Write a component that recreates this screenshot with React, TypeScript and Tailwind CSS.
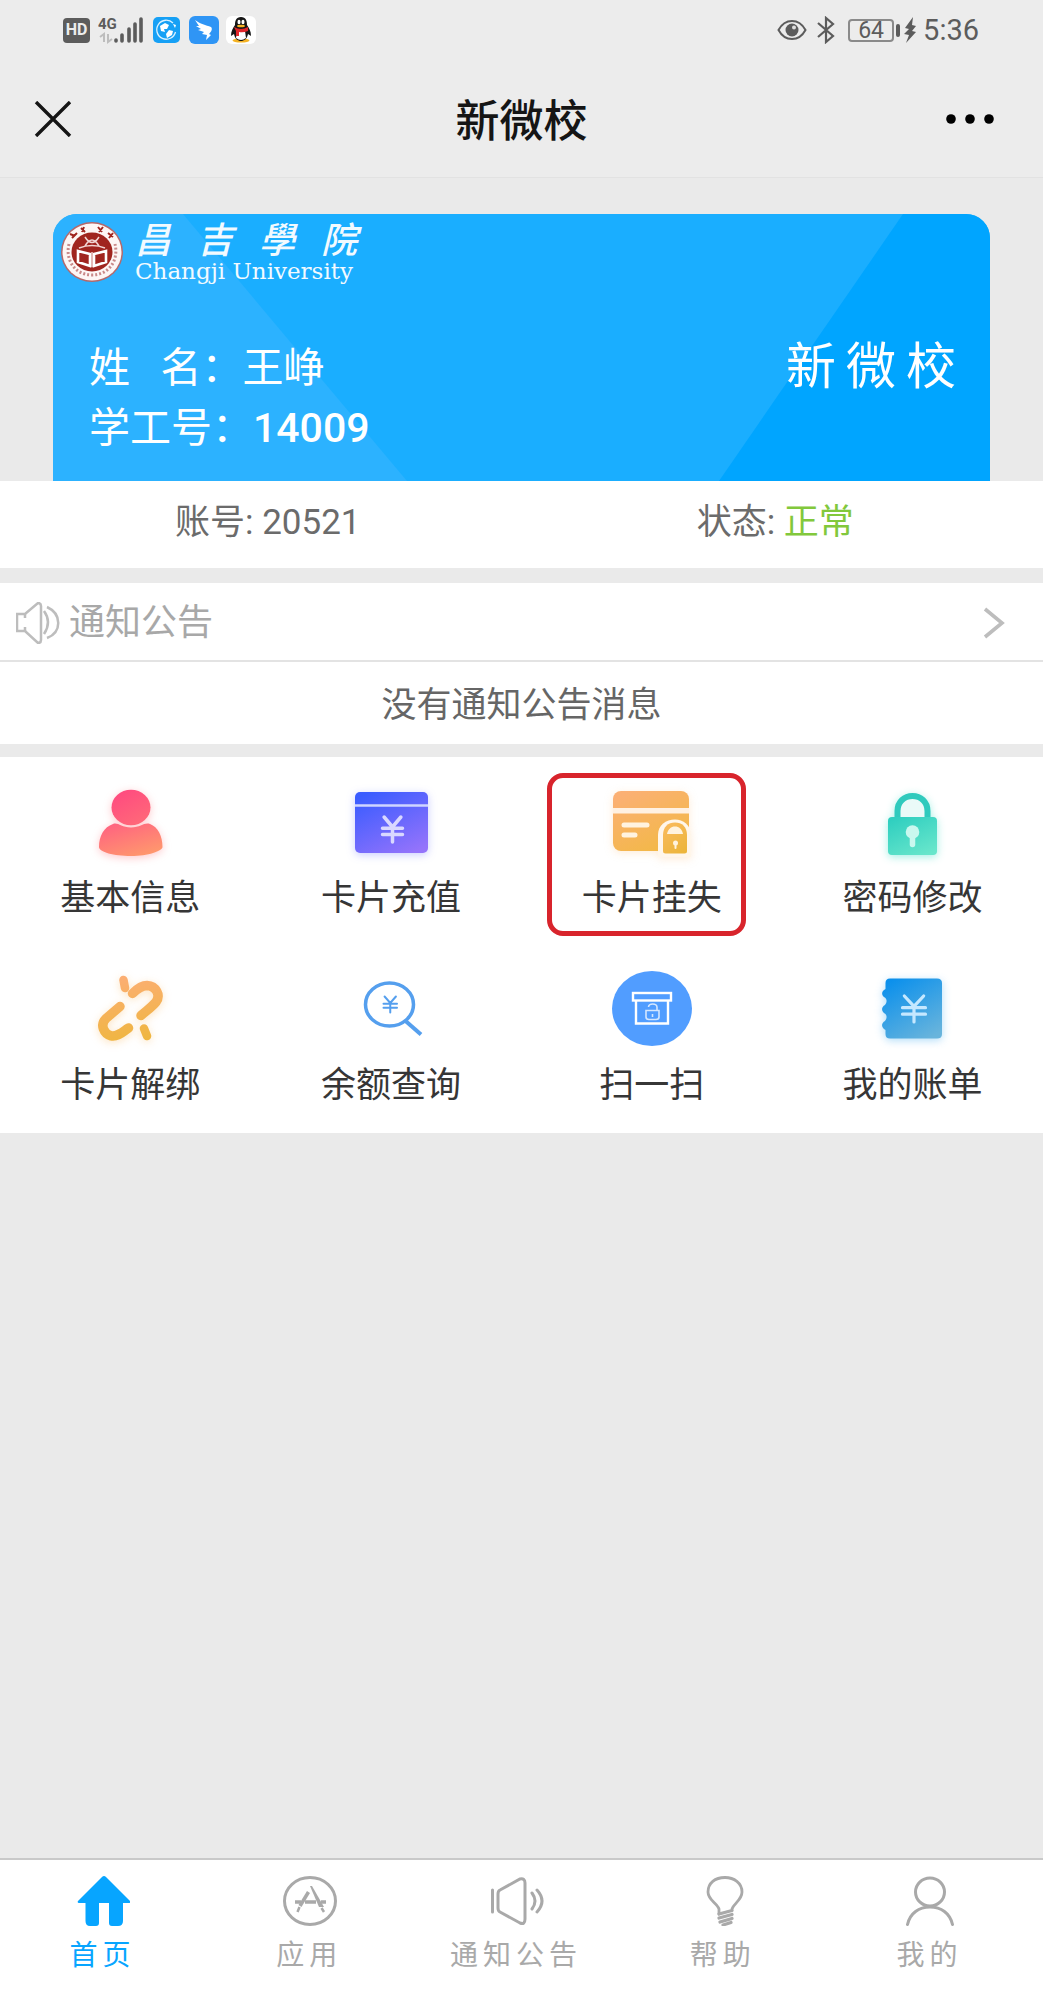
import React from 'react'

const gray = '#a9a9a9'

function Yen({ x, y, w, h, sw }: any) {
  return (
    <g transform={`translate(${x} ${y})`} fill="none" strokeWidth={sw} strokeLinecap="round">
      <path d={`M${w * 0.08} 0L${w / 2} ${h * 0.4}L${w * 0.92} 0M${w / 2} ${h * 0.4}V${h}M0 ${h * 0.45}H${w}M0 ${h * 0.7}H${w}`} />
    </g>
  )
}

function Gradient({ id, from, to }: any) {
  return (
    <defs>
      <linearGradient id={id} x1="0.2" y1="0" x2="0.8" y2="1">
        <stop offset="0" stopColor={from} />
        <stop offset="1" stopColor={to} />
      </linearGradient>
    </defs>
  )
}

const UserIcon = () => (
  <svg viewBox="0 0 80 75" className="h-[75px] w-20 drop-shadow-[0_2px_4px_rgba(255,100,110,0.35)]">
    <Gradient id="user" from="#ff4a80" to="#ff6a78" />
    <Gradient id="userBody" from="#ff6380" to="#ff9a6c" />
    <ellipse cx="41" cy="23.500" rx="19.500" ry="17.800" fill="url(#user)" />
    <path d="M23 40C28 38 31 43.500 41 43.500C51 43.500 54 38 60 40C68 43 72.500 52 72.500 63C72.500 67 58 72 41 72C24 72 9 68 9 63C9 52 14 43 23 40Z" fill="url(#userBody)" />
  </svg>
)

const RechargeIcon = () => (
  <svg viewBox="0 0 80 75" className="h-[75px] w-20 drop-shadow-[0_2px_4px_rgba(80,90,255,0.3)]">
    <Gradient id="recharge" from="#3a5cff" to="#9473fb" />
    <rect x="4" y="8" width="73" height="61" rx="5" fill="url(#recharge)" />
    <path d="M4 21.500H77" stroke="#cfd5ff" strokeWidth="2.500" />
    <g stroke="#d9d8ff"><Yen x={31.5} y={33} w={20} h={25} sw={3.5} /></g>
  </svg>
)

const LossIcon = () => (
  <svg viewBox="0 0 80 75" className="h-[75px] w-20 drop-shadow-[0_2px_4px_rgba(250,180,100,0.25)]">
    <Gradient id="loss" from="#fbb074" to="#f2b944" />
    <Gradient id="lossLock" from="#f9ba5c" to="#ecb53b" />
    <rect x="1" y="7" width="76" height="60" rx="8" fill="url(#loss)" />
    <path d="M1 26.800H77" stroke="#fff1e2" strokeWidth="5.600" />
    <path d="M12 41H35M12 51H23" stroke="#fff3df" strokeWidth="5" strokeLinecap="round" />
    <path d="M46 73V51C46 41 54 35.500 63 35.500C71 35.500 79 41 79 51V73Z" fill="#fff6ea" />
    <path d="M51 67V51C51 43 56 38.500 63 38.500C70 38.500 75 43 75 51V67Q75 69.500 72.500 69.500H53.500Q51 69.500 51 67Z" fill="url(#lossLock)" />
    <path d="M55 50C56 45 59 42.500 63 42.500C67 42.500 70 45 71 50Z" fill="#fff3df" />
    <circle cx="63.500" cy="59" r="2.500" fill="#fff3df" />
    <path d="M63.500 60V64" stroke="#fff3df" strokeWidth="2" strokeLinecap="round" />
  </svg>
)

const PasswordIcon = () => (
  <svg viewBox="0 0 80 75" className="h-[75px] w-20 drop-shadow-[0_2px_4px_rgba(50,220,195,0.45)]">
    <Gradient id="pwd" from="#30cfc0" to="#68e6cb" />
    <path d="M24.500 35V27C24.500 17.500 31.500 12 39.500 12C47.500 12 54.500 17.500 54.500 27V35" fill="#eafaf8" stroke="#2fcabd" strokeWidth="6" />
    <rect x="15" y="33" width="49" height="38" rx="4" fill="url(#pwd)" />
    <circle cx="39.500" cy="48" r="6.800" fill="#c9f8ef" />
    <path d="M39.500 50V60.500" stroke="#c9f8ef" strokeWidth="5.500" strokeLinecap="round" />
  </svg>
)

const UnbindIcon = () => (
  <svg viewBox="0 0 80 75" className="h-[75px] w-20 drop-shadow-[0_2px_4px_rgba(250,180,90,0.35)]">
    <defs>
      <linearGradient id="unbind" gradientUnits="userSpaceOnUse" x1="30" y1="5" x2="42" y2="70">
        <stop offset="0" stopColor="#fcae74" />
        <stop offset="1" stopColor="#efb640" />
      </linearGradient>
    </defs>
    <g fill="none" stroke="url(#unbind)" strokeLinecap="round" strokeLinejoin="round">
      <path d="M33.500 9L35 17M54 57.500L57 65" strokeWidth="8.500" />
      <path d="M42.500 22.500C48 17 52 14.500 57 14.500C66 15 71 24 66 31C62 36 56 40 51 44.500" strokeWidth="9.500" />
      <path d="M30 35.500L16 47.500C9.500 54 14 63 21 64.800C28 66 33 60.500 38.500 57" strokeWidth="9.500" />
    </g>
  </svg>
)

const QueryIcon = () => (
  <svg viewBox="0 0 80 75" className="h-[75px] w-20">
    <g fill="none" stroke="#559fee">
      <ellipse cx="38.500" cy="33.500" rx="24" ry="21.500" strokeWidth="3.500" />
      <path d="M54 49.500L70 63.500" strokeWidth="4" />
      <Yen x={32.5} y={25.5} w={13.5} h={16} sw={2} />
    </g>
  </svg>
)

const ScanIcon = () => (
  <svg viewBox="0 0 80 75" className="h-[75px] w-20">
    <ellipse cx="40" cy="37.500" rx="40" ry="37.500" fill="#519dff" />
    <g fill="none" stroke="#fff" strokeWidth="2.400">
      <rect x="21" y="22" width="38" height="7.500" />
      <path d="M24 29.500V52.500H56V29.500" />
    </g>
    <g fill="none" stroke="#d4e7ff" strokeWidth="1.600">
      <path d="M34 39.500H47V46Q47 48.500 44 48.500H37Q34 48.500 34 46Z" />
      <path d="M36.500 36C37 32 44.500 32 45 36V39.500M40.500 43V46" />
    </g>
  </svg>
)

const BillIcon = () => (
  <svg viewBox="0 0 80 75" className="h-[75px] w-20 drop-shadow-[0_2px_4px_rgba(60,170,240,0.4)]">
    <Gradient id="bill" from="#0b90ec" to="#68b4dc" />
    <path d="M17 7.500H64Q69 7.500 69 12V63Q69 67.500 64 67.500H17Q12.500 67.500 12.500 63V59C8 57 8 52 12 50Q15 46 12.500 43C8 41 8 36 12 34Q15 30 12.500 27C8 25 8 20 12.500 18V12Q12.500 7.500 17 7.500Z" fill="url(#bill)" />
    <g stroke="#c5e8ff"><Yen x={29.5} y={25} w={23} h={26} sw={3.2} /></g>
  </svg>
)

const HomeIcon = () => (
  <svg viewBox="0 0 54 50" className="h-[50px] w-[54px]" fill="#07a5ff">
    <path d="M26 1Q28 -1 30 1L54 25Q55 27 53 27H47V45Q47 50 42 50H36Q33 50 33 47V27H23V47Q23 50 20 50H14Q9.500 50 9.500 45V27H3Q1 27 2 25Z" />
  </svg>
)

const AppsIcon = () => (
  <svg viewBox="0 0 54 50" className="h-[50px] w-[54px]" fill="none" stroke={gray}>
    <ellipse cx="27" cy="25" rx="25.500" ry="23.500" strokeWidth="3" />
    <path d="M25.500 16L17 30" strokeWidth="3.500" />
    <path d="M27 10L29 10L41 31L36 31Z" fill={gray} stroke="none" />
    <path d="M16.500 31L14.500 36M38.500 32L41 36" strokeWidth="2.500" />
    <path d="M12 26H18M22 26H33M38 26H43" strokeWidth="3.500" />
  </svg>
)

const NoticeIcon = () => (
  <svg viewBox="0 0 54 50" className="h-[50px] w-[54px]" fill="none" stroke={gray} strokeWidth="3" strokeLinecap="round">
    <path d="M2.500 14V36M10 14L30 3Q35 2 35 7V43Q35 49 30 47L10 36Q8 35 8 32V18Q8 15 10 14Z" />
    <path d="M42 17Q48 25 42 33M47 14Q57 25 47 36" />
  </svg>
)

const HelpIcon = () => (
  <svg viewBox="0 0 54 50" className="h-[50px] w-[54px]" fill="none" stroke={gray} strokeWidth="2.800" strokeLinecap="round" strokeLinejoin="round">
    <path d="M22 38V33C20 27 11 24 11 16C11 7 18 1.500 28 1.500C37 1.500 45 7 45 16C45 24 37 27 35 33" />
    <path d="M22 38L35 34.500M22 42L35 38.500M23 46L35 42.500M26 49L34 46.500" strokeWidth="3.200" />
  </svg>
)

const MeIcon = () => (
  <svg viewBox="0 0 54 50" className="h-[50px] w-[54px]" fill="none" stroke={gray} strokeWidth="3" strokeLinecap="round">
    <ellipse cx="26" cy="16" rx="14.500" ry="14" />
    <path d="M3.500 48.500C6 37 15 31 26 31C37 31 46 37 48.500 48.500" />
  </svg>
)

const menus = [
  { title: '基本信息', icon: <UserIcon /> },
  { title: '卡片充值', icon: <RechargeIcon /> },
  { title: '卡片挂失', icon: <LossIcon />, marked: true },
  { title: '密码修改', icon: <PasswordIcon /> },
  { title: '卡片解绑', icon: <UnbindIcon /> },
  { title: '余额查询', icon: <QueryIcon /> },
  { title: '扫一扫', icon: <ScanIcon /> },
  { title: '我的账单', icon: <BillIcon /> },
]

const tabs = [
  { title: '首页', icon: <HomeIcon />, active: true },
  { title: '应用', icon: <AppsIcon /> },
  { title: '通知公告', icon: <NoticeIcon /> },
  { title: '帮助', icon: <HelpIcon /> },
  { title: '我的', icon: <MeIcon /> },
]

function StatusBar() {
  return (
    <div className="flex h-[60px] items-center justify-between pr-16 pl-[63px] text-[#5c5c5c]">
      <div className="flex items-center">
        <span className="flex h-[25px] w-[27px] items-center justify-center rounded-[4px] bg-[#5c5c5c] text-[16px] font-bold text-[#ececec]">HD</span>
        <svg viewBox="0 0 46 28" className="ml-2 h-7 w-[46px]">
          <text x="0" y="13" fontSize="15" fontWeight="700" fill="#5c5c5c">4G</text>
          <path d="M6 26V18L2 21M10 18V26L14 23" fill="none" stroke="#bdbdbd" strokeWidth="2" />
          <path d="M18 24V25M24 19V25M31 13V25M37 8V25M43 3V25" stroke="#5c5c5c" strokeWidth="3.600" strokeLinecap="round" />
        </svg>
        <svg viewBox="0 0 27 26" className="ml-[9px] h-[26px] w-[27px]">
          <rect width="27" height="26" rx="5" fill="#16a0f5" />
          <path d="M20 6A9.500 9.500 0 1 0 22.500 15" fill="none" stroke="#d9f1ff" strokeWidth="1.300" />
          <path d="M7 9L12 6L16 8L14 12L11 12L12 15L8 14ZM16 13L20 14L19 18L14 21L13 17ZM20 7L23 8L22 11Z" fill="#fff" />
        </svg>
        <svg viewBox="0 0 30 28" className="ml-[9px] h-7 w-[30px]">
          <rect width="30" height="28" rx="6" fill="#2f95f5" />
          <path d="M6 4C11 8 17 9 22 11C24 13 22 16 20 18L22 19L17 24L18 19L13 18L15 16L9 14L12 13L7 10L10 10Z" fill="#fff" />
        </svg>
        <svg viewBox="0 0 30 28" className="ml-[7px] h-7 w-[30px]">
          <rect width="30" height="28" rx="6" fill="#fff" />
          <ellipse cx="15" cy="24.500" rx="8.500" ry="2" fill="#f5b324" />
          <path d="M15 1C10 1 9 5 9 9C7 12 5 15 5 20L8 18C9 23 12 25 15 25C18 25 21 23 22 18L25 20C25 15 23 12 21 9C21 5 20 1 15 1Z" fill="#151515" />
          <path d="M11 15H19L20 22Q15 26 10 22Z" fill="#fff" />
          <path d="M8 11Q15 15 22 11L22 15Q17 17 13 16V20H10V15Z" fill="#e1262b" />
          <ellipse cx="13" cy="6" rx="1.500" ry="2.200" fill="#fff" />
          <ellipse cx="17" cy="6" rx="1.500" ry="2.200" fill="#fff" />
          <ellipse cx="15" cy="10" rx="4" ry="1.300" fill="#f5b324" />
        </svg>
      </div>
      <div className="flex items-center">
        <svg viewBox="0 0 30 22" className="h-[22px] w-[30px]">
          <path d="M1.500 11C8 -1 22 -1 28.500 11C22 23 8 23 1.500 11Z" fill="none" stroke="#5c5c5c" strokeWidth="2" />
          <circle cx="15" cy="11" r="6.500" fill="#5c5c5c" />
          <circle cx="17" cy="8.500" r="2" fill="#dedede" />
        </svg>
        <svg viewBox="0 0 20 28" className="ml-[9px] h-7 w-5" fill="none" stroke="#5c5c5c" strokeWidth="2.200">
          <path d="M2 7L17 20L10 26V2L17 8L2 21" />
        </svg>
        <span className="ml-3 flex h-[23px] w-[46px] items-center justify-center rounded-[4px] border-2 border-[#8a8a8a] text-[23px] leading-none">64</span>
        <span className="ml-[2px] h-[13px] w-1 rounded-full bg-[#5c5c5c]"></span>
        <svg viewBox="0 0 12 26" className="ml-1 h-[26px] w-3" fill="#5c5c5c">
          <path d="M9 0L1 11L5 12L0 17L5 18L2 26L12 15L8 14L12 9L8 8Z" />
        </svg>
        <span className="ml-[7px] text-[29px] leading-none">5:36</span>
      </div>
    </div>
  )
}

function SchoolLogo() {
  return (
    <div className="flex items-center gap-3">
      <svg viewBox="0 0 62 60" className="h-[60px] w-[62px]">
        <ellipse cx="31" cy="30" rx="31" ry="30" fill="#b5696b" />
        <ellipse cx="31" cy="30" rx="29.500" ry="28.500" fill="#fdf6f5" />
        <path d="M8 22C4 38 14 53 31 53C48 53 58 38 54 22" fill="none" stroke="#c98a8a" strokeWidth="3" strokeDasharray="2 2" />
        <ellipse cx="31" cy="30" rx="20.500" ry="19.500" fill="#a0251f" />
        <path d="M9 12L14 14M11 16L16 11M20 6L24 10M23 5L21 10M37 5L41 10M42 5L38 10M47 11L52 15M52 11L48 16" stroke="#a0251f" strokeWidth="2" />
        <path d="M17 29L29 32V44L17 40ZM45 29L33 32V44L45 40Z" fill="none" stroke="#fff" strokeWidth="2.600" />
        <path d="M31 30V45M18 26Q31 21 44 26M24 15Q31 26 38 15M24 24Q31 12 38 24" fill="none" stroke="#f1d5d3" strokeWidth="1.500" />
      </svg>
      <div className="flex w-[222px] flex-col text-[#f2faff]">
        <div className="flex justify-between font-['Liberation_Serif','Noto_Sans_CJK_SC',serif] text-[36px] leading-[38px] font-medium italic">
          <span>昌</span>
          <span>吉</span>
          <span>學</span>
          <span>院</span>
        </div>
        <div className="font-['DejaVu_Serif',serif] text-[23px] leading-[22px] whitespace-nowrap">Changji University</div>
      </div>
    </div>
  )
}

export default function App() {
  return (
    <div className="flex min-h-screen flex-col bg-[#eaeaea] font-['Roboto','Noto_Sans_CJK_SC',sans-serif]">
      <header className="border-b border-[#e2e2e2] bg-[#ececec]">
        <StatusBar />
        <div className="flex h-[117px] items-center justify-between pr-[49px] pl-[34px]">
          <button aria-label="关闭" className="flex w-[63px]">
            <svg viewBox="0 0 38 36" className="h-9 w-[38px]" stroke="#151515" strokeWidth="3.400">
              <path d="M2 1L36 35M36 1L2 35" />
            </svg>
          </button>
          <h1 className="pt-[6px] text-[44px] leading-[64px] font-medium text-[#151515]">新微校</h1>
          <button aria-label="更多" className="flex w-12 justify-end">
            <svg viewBox="0 0 48 10" className="h-[10px] w-12" fill="#000">
              <circle cx="5" cy="5" r="4.800" />
              <circle cx="24" cy="5" r="4.800" />
              <circle cx="43" cy="5" r="4.800" />
            </svg>
          </button>
        </div>
      </header>

      <section className="relative mx-[53px] mt-9 overflow-hidden rounded-t-3xl bg-[#1aaeff] text-white">
        <svg viewBox="0 0 937 266" preserveAspectRatio="none" className="absolute inset-0 h-full w-full">
          <path d="M0 0H130L354 266H0Z" fill="#2cb2ff" />
          <path d="M850 0H937V266H666Z" fill="#00a5ff" />
        </svg>
        <div className="relative pt-2 pb-[23px] pl-2">
          <SchoolLogo />
          <div className="mt-14 flex items-start justify-between pr-6 pl-7">
            <div className="text-[41px] leading-[60px]">
              <p>姓&nbsp;&nbsp;&nbsp;名：王峥</p>
              <p>学工号：<span className="font-medium">14009</span></p>
            </div>
            <h2 className="text-[50px] leading-[58px] tracking-[10px]">新微校</h2>
          </div>
        </div>
      </section>

      <section className="grid grid-cols-2 bg-white px-[14px] pt-4 pb-[19px] text-center text-[35px] leading-[52px] text-[#6b6b6b]">
        <p>账号: 20521</p>
        <p>状态: <span className="text-[#82c83c]">正常</span></p>
      </section>

      <section className="mt-[15px] bg-white">
        <a href="#notice" className="flex h-[79px] items-center border-b-2 border-[#e3e3e3] pt-[3px] pr-[38px] pl-4 text-[36px] text-[#a8a8a8]">
          <svg viewBox="0 0 44 42" className="h-[42px] w-11" fill="none" stroke="#bdbdbd" strokeWidth="2.500">
            <path d="M1 12H9L22 1Q25 1 25 4V38Q25 41 22 41L9 29H1Z" />
            <path d="M9 12V16M9 25V29M28 9Q36 20 28 32M31 5C46 12 46 30 31 36" />
          </svg>
          <span className="ml-[9px] flex-1">通知公告</span>
          <svg viewBox="0 0 22 32" className="h-8 w-[22px]" fill="none" stroke="#bdbdbd" strokeWidth="3.600">
            <path d="M2 2L19 16L2 30" />
          </svg>
        </a>
        <p className="pt-[18px] pb-3 text-center text-[35px] leading-[52px] text-[#666]">没有通知公告消息</p>
      </section>

      <section className="mt-[13px] grid grid-cols-4 bg-white pb-[2px]">
        {menus.map((item) => (
          <button key={item.title} className="relative flex flex-col items-center gap-[14px] pt-[27px] pb-[19px]">
            {item.icon}
            <span className="text-[35px] leading-[52px] text-[#363636]">{item.title}</span>
            {item.marked && <span className="absolute top-4 right-9 bottom-2 left-[25px] rounded-2xl border-[5px] border-[#d8242c]"></span>}
          </button>
        ))}
      </section>

      <nav className="mt-auto grid grid-cols-5 border-t-2 border-[#c9c9c9] bg-white pt-4 pr-[9px] pb-4">
        {tabs.map((tab) => (
          <a key={tab.title} href="#" className="flex flex-col items-center gap-[9px]">
            {tab.icon}
            <span className={`mr-[2px] text-[28px] leading-[41px] tracking-[5px] ${tab.active ? 'text-[#07a5ff]' : 'text-[#a9a9a9]'}`}>{tab.title}</span>
          </a>
        ))}
      </nav>
    </div>
  )
}
